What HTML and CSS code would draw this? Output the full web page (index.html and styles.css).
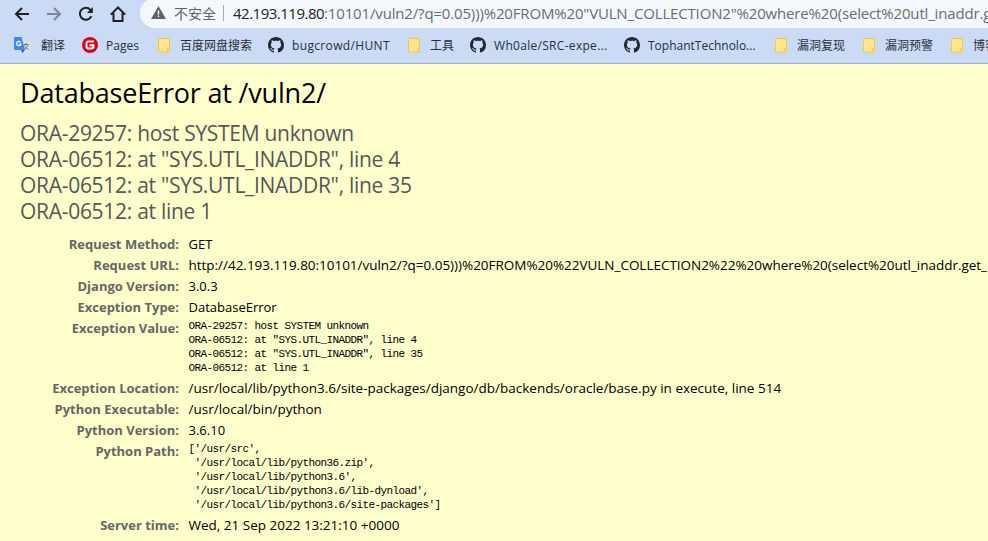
FILE: index.html
```html
<!DOCTYPE html>
<html lang="zh">
<head>
<meta charset="utf-8">
<title>DatabaseError at /vuln2/</title>
<link rel="stylesheet" href="styles.css">
</head>
<body>
<svg class="defs" width="0" height="0">
  <symbol id="folder" viewBox="0 0 12 15"><path d="M.5.5h11v13.500H.5z" fill="#ffe58f" stroke="#f2c84b"/><path d="M9.500 10.500h2v3.500h-2z" fill="#ffe58f" stroke="#f2c84b"/></symbol>
  <symbol id="github" viewBox="0 0 16 16"><path fill="#24292f" d="M8 0C3.580 0 0 3.580 0 8c0 3.540 2.290 6.530 5.470 7.590.4.070.55-.17.55-.38 0-.19-.01-.82-.01-1.490-2.010.37-2.530-.49-2.690-.94-.09-.23-.48-.94-.82-1.130-.28-.15-.68-.52-.01-.53.63-.01 1.080.58 1.230.82.72 1.210 1.870.87 2.330.66.070-.52.28-.87.51-1.070-1.780-.2-3.640-.89-3.640-3.950 0-.87.31-1.590.82-2.150-.08-.2-.36-1.020.080-2.120 0 0 .67-.21 2.200.82.64-.18 1.320-.27 2-.27s1.360.09 2 .27c1.530-1.040 2.200-.82 2.200-.82.44 1.100.16 1.920.080 2.120.51.56.82 1.270.82 2.150 0 3.070-1.870 3.750-3.650 3.950.29.25.54.73.54 1.480 0 1.070-.01 1.930-.01 2.200 0 .21.15.46.55.38A8 8 0 0 0 16 8c0-4.420-3.580-8-8-8z"/></symbol>
</svg>
<div class="chrome">
  <div class="toolbar">
    <svg class="nav" viewBox="0 0 16 16"><path d="M15 8H2M8 2L2 8l6 6"/></svg>
    <svg class="nav faded" viewBox="0 0 16 16"><path d="M1 8h13M8 2l6 6-6 6"/></svg>
    <svg class="nav" viewBox="0 0 16 16"><path d="M13.400 10.200A6 6 0 1 1 12.400 3.800L14 5.500"/><path class="solid" d="M14.800 1v6H9z"/></svg>
    <svg class="nav" viewBox="0 0 16 16"><path d="M3.500 7v8h9V7M.8 8.600L8 1.500l7.200 7.100"/></svg>
    <div class="omnibox">
      <svg class="warn" viewBox="0 0 15 13"><path d="M7.500 0L15 13H0z" fill="#5f6368"/><path d="M7.500 4.500v4M7.500 9.500v1.600" stroke="#f4f8fd" stroke-width="1.500"/></svg>
      <span class="insecure">不安全</span><span class="sep"></span>
      <span class="url"><b>42.193.119.80</b>:10101/vuln2/?q=0.05)))%20FROM%20"VULN_COLLECTION2"%20where%20(select%20utl_inaddr.g</span>
    </div>
  </div>
  <div class="bookmarks">
    <a class="bm b1"><svg class="ic" viewBox="0 0 16 16"><path fill="#dcdfe3" d="M6 4h9a1 1 0 0 1 1 1v10a1 1 0 0 1-1 1H9z"/><path d="M9.500 7.500h5M12 6v1.500M14 7.500c-.5 2.500-2 4-4 5M10.500 8.500c.8 2 2 3 4 4" stroke="#6b7886" fill="none"/><path fill="#4285f4" d="M1 0h6.500L11 13H1a1 1 0 0 1-1-1V1a1 1 0 0 1 1-1z"/><path fill="#2b5fc4" d="M7 13h4l-2.500 3z"/><path d="M6.600 5.200A2.200 2.200 0 1 0 7 7H4.800" stroke="#fff" stroke-width="1.200" fill="none"/></svg><span>翻译</span></a>
    <a class="bm b2"><svg class="ic" viewBox="0 0 16 16"><circle cx="8" cy="8" r="8" fill="#d9001b"/><path d="M11.800 4.500H6.500a2 2 0 0 0-2 2v3a2 2 0 0 0 2 2h3a2 2 0 0 0 2-2V8.300H7.500" stroke="#fff" stroke-width="1.900" fill="none"/></svg><span>Pages</span></a>
    <a class="bm b3"><svg class="fo"><use href="#folder"/></svg><span>百度网盘搜索</span></a>
    <a class="bm b4"><svg class="ic"><use href="#github"/></svg><span>bugcrowd/HUNT</span></a>
    <a class="bm b5"><svg class="fo"><use href="#folder"/></svg><span>工具</span></a>
    <a class="bm b6"><svg class="ic"><use href="#github"/></svg><span>Wh0ale/SRC-expe...</span></a>
    <a class="bm b7"><svg class="ic"><use href="#github"/></svg><span>TophantTechnolo...</span></a>
    <a class="bm b8"><svg class="fo"><use href="#folder"/></svg><span>漏洞复现</span></a>
    <a class="bm b8"><svg class="fo"><use href="#folder"/></svg><span>漏洞预警</span></a>
    <a class="bm b9"><svg class="fo"><use href="#folder"/></svg><span>博客</span></a>
  </div>
</div>
<main class="summary">
  <h1>DatabaseError at /vuln2/</h1>
  <pre class="exception">ORA-29257: host SYSTEM unknown
ORA-06512: at "SYS.UTL_INADDR", line 4
ORA-06512: at "SYS.UTL_INADDR", line 35
ORA-06512: at line 1</pre>
  <dl class="meta">
    <dt>Request Method:</dt><dd class="word">GET</dd>
    <dt>Request URL:</dt><dd class="long">http://42.193.119.80:10101/vuln2/?q=0.05)))%20FROM%20%22VULN_COLLECTION2%22%20where%20(select%20utl_inaddr.get_</dd>
    <dt>Django Version:</dt><dd class="word">3.0.3</dd>
    <dt>Exception Type:</dt><dd class="word">DatabaseError</dd>
    <dt>Exception Value:</dt><dd><pre>ORA-29257: host SYSTEM unknown
ORA-06512: at "SYS.UTL_INADDR", line 4
ORA-06512: at "SYS.UTL_INADDR", line 35
ORA-06512: at line 1</pre></dd>
    <dt>Exception Location:</dt><dd>/usr/local/lib/python3.6/site-packages/django/db/backends/oracle/base.py in execute, line 514</dd>
    <dt>Python Executable:</dt><dd>/usr/local/bin/python</dd>
    <dt>Python Version:</dt><dd class="word">3.6.10</dd>
    <dt>Python Path:</dt><dd><pre>['/usr/src',
 '/usr/local/lib/python36.zip',
 '/usr/local/lib/python3.6',
 '/usr/local/lib/python3.6/lib-dynload',
 '/usr/local/lib/python3.6/site-packages']</pre></dd>
    <dt>Server time:</dt><dd>Wed, 21 Sep 2022 13:21:10 +0000</dd>
  </dl>
</main>
</body>
</html>
```
FILE: styles.css
```css
* { box-sizing: border-box; margin: 0; padding: 0; }
body { width: 988px; height: 541px; overflow: hidden; background: #ffc; color: #000; font-family: "Open Sans", "Noto Sans CJK SC", sans-serif; font-size: 13px; }
.defs { display: none; }
.chrome { height: 64px; background: #cbdbf6; border-bottom: 1px solid #a3b2cb; overflow: hidden; }
.toolbar { display: flex; align-items: center; height: 27px; padding-left: 14px; }
.nav { width: 16px; height: 16px; margin-right: 16px; flex: none; fill: none; stroke: #202124; stroke-width: 2; }
.nav .solid { fill: #202124; stroke: none; }
.faded { opacity: .45; }
.omnibox { display: flex; align-items: center; flex: 1; min-width: 0; height: 30px; margin: -2px 0 0 -2px; padding-left: 11px; border-radius: 15px 0 0 15px; background: #f4f8fd; overflow: hidden; }
.warn { width: 15px; height: 13px; margin-right: 8px; flex: none; }
.insecure { font-size: 14px; color: #5f6368; width: 42px; flex: none; }
.sep { width: 1px; height: 16px; background: #a5a9ae; margin: 0 9px 0 7px; flex: none; }
.url { font-size: 15px; letter-spacing: -.16px; color: #6a6d71; white-space: nowrap; }
.url b { font-weight: 400; color: #202124; letter-spacing: -.5px; }
.bookmarks { display: flex; align-items: center; height: 36px; padding-left: 14px; color: #27303d; font-size: 12px; white-space: nowrap; }
.bm { display: flex; align-items: center; flex: none; }
.ic { width: 16px; height: 16px; margin-right: 8px; flex: none; }
.fo { width: 12px; height: 15px; margin-right: 10px; flex: none; }
.b1 { width: 68px; } .b1 .ic { margin-right: 11px; }
.b2 { width: 76px; }
.b3 { width: 110px; }
.b4 { width: 140px; }
.b4 span { letter-spacing: .35px; }
.b5 { width: 62px; }
.b6 { width: 154px; }
.b6 span { letter-spacing: .3px; }
.b7 { width: 151px; }
.b8 { width: 88px; }
.summary { padding: 11px 0 0 20px; }
h1 { font-size: 27px; letter-spacing: -.19px; line-height: 36px; font-weight: 400; }
.exception { margin-top: 9px; font-family: inherit; font-size: 21px; letter-spacing: -.29px; line-height: 26px; color: #575757; }
.meta { display: grid; grid-template-columns: 159px 1fr; column-gap: 9.500px; margin-top: 10px; line-height: 21px; }
dt { text-align: right; font-weight: 700; color: #666; }
dd { font-size: 13.500px; white-space: nowrap; min-width: 0; }
.word { font-size: 13px; }
.long { letter-spacing: -.02px; }
dd pre { font-family: "Liberation Mono", monospace; font-size: 11px; letter-spacing: -.6px; line-height: 14px; padding: 1px 0 3px; }
```
